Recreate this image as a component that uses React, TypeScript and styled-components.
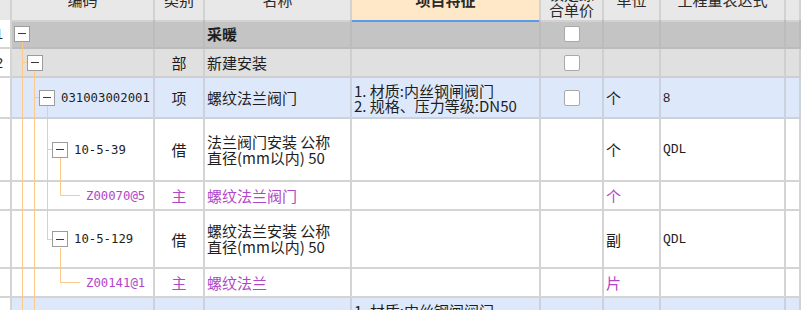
import React from 'react';
import styled, { createGlobalStyle } from 'styled-components';

const GlobalStyle = createGlobalStyle`
  html, body {
    margin: 0;
    padding: 0;
    background: #fff;
    overflow: hidden;
  }
  body {
    font-family: "Noto Sans CJK SC", "Liberation Sans", sans-serif;
    font-size: 15px;
    color: #1e1e1e;
  }
`;

const COLS = '12px 143px 50px 147px 189px 63px 57px 125px 1fr';

type Tone = 'section' | 'group' | 'item' | 'plain' | 'material';

const TONE_BG: Record<Tone, string> = {
  section: '#c4c4c4',
  group: '#e0e0e0',
  item: '#dde9fb',
  plain: '#ffffff',
  material: '#ffffff',
};

const TONE_LINE: Record<Tone, string> = {
  section: '#bcbcbc',
  group: '#cfcfcf',
  item: '#ccd2db',
  plain: '#d4d4d4',
  material: '#d4d4d4',
};

const GUIDE = '#fcc88c';
const LX = [10.5, 22.5, 35.5, 48.5];
const BOX_LEFT = [2, 15, 27, 40];
const LEAF_LEFT = 74;
const LEAF_STUB = 68;

interface TreeSpec {
  level: number;
  leaf?: boolean;
  full: number[];
  parent?: number;
  down?: boolean;
}

interface RowData {
  tone: Tone;
  h: number;
  num?: string;
  tree: TreeSpec;
  code?: string;
  kind?: string;
  name?: string[];
  bold?: boolean;
  feature?: string[];
  check?: boolean;
  unit?: string;
  qty?: string;
  qtyMono?: boolean;
}

const FEATURE = ['1. 材质:内丝钢闸阀门', '2. 规格、压力等级:DN50'];

const ROWS: RowData[] = [
  { tone: 'section', h: 29, num: '1', tree: { level: 0, full: [], down: true }, name: ['采暖'], bold: true, check: true },
  { tone: 'group', h: 29, num: '2', tree: { level: 1, full: [0], parent: 0, down: true }, kind: '部', name: ['新建安装'], check: true },
  {
    tone: 'item', h: 41, tree: { level: 2, full: [0, 1], parent: 1, down: true },
    code: '031003002001', kind: '项', name: ['螺纹法兰阀门'], feature: FEATURE, check: true, unit: '个', qty: '8',
  },
  {
    tone: 'plain', h: 63, tree: { level: 3, full: [0, 1, 2], parent: 2, down: true },
    code: '10-5-39', kind: '借', name: ['法兰阀门安装 公称', '直径(mm以内) 50'], unit: '个', qty: 'QDL', qtyMono: true,
  },
  {
    tone: 'material', h: 29, tree: { level: 4, leaf: true, full: [0, 1, 2], parent: 3 },
    code: 'Z00070@5', kind: '主', name: ['螺纹法兰阀门'], unit: '个',
  },
  {
    tone: 'plain', h: 58, tree: { level: 3, full: [0, 1], parent: 2, down: true },
    code: '10-5-129', kind: '借', name: ['螺纹法兰安装 公称', '直径(mm以内) 50'], unit: '副', qty: 'QDL', qtyMono: true,
  },
  {
    tone: 'material', h: 29, tree: { level: 4, leaf: true, full: [0, 1], parent: 3 },
    code: 'Z00141@1', kind: '主', name: ['螺纹法兰'], unit: '片',
  },
  { tone: 'item', h: 41, tree: { level: 2, full: [0, 1], parent: 1, down: true }, feature: FEATURE, check: true },
];

const Sheet = styled.div`
  width: 801px;
  height: 310px;
  overflow: hidden;
`;

const Scroller = styled.div`
  margin-top: -14px;
`;

const HeaderRow = styled.div`
  display: grid;
  grid-template-columns: ${COLS};
  height: 34px;
  background: #e8e8e8;
`;

const HeadCell = styled.div<{ $accent?: boolean; $tall?: boolean }>`
  box-sizing: border-box;
  display: flex;
  align-items: center;
  justify-content: center;
  text-align: center;
  padding-bottom: ${p => (p.$tall ? 2 : 6)}px;
  border-right: 2px solid #d2d2d2;
  border-bottom: 2px solid ${p => (p.$accent ? '#5a9be8' : '#d2d2d2')};
  background: ${p => (p.$accent ? '#ffe8c8' : '#e8e8e8')};
  font-weight: ${p => (p.$accent ? 700 : 400)};
  line-height: 16px;
  color: #2a2a2a;
  white-space: nowrap;
`;

const Row = styled.div<{ $tone: Tone; $h: number }>`
  display: grid;
  grid-template-columns: ${COLS};
  height: ${p => p.$h}px;
  background: ${p => TONE_BG[p.$tone]};
  color: ${p => (p.$tone === 'material' ? '#b246c8' : '#1e1e1e')};
`;

const Cell = styled.div<{ $tone: Tone; $center?: boolean; $pad?: number }>`
  box-sizing: border-box;
  position: relative;
  display: flex;
  align-items: center;
  justify-content: ${p => (p.$center ? 'center' : 'flex-start')};
  padding-left: ${p => (p.$center ? 0 : p.$pad ?? 2)}px;
  border-right: 2px solid ${p => TONE_LINE[p.$tone]};
  border-bottom: 2px solid ${p => TONE_LINE[p.$tone]};
  min-width: 0;
  white-space: nowrap;
`;

const NumCell = styled.div`
  box-sizing: border-box;
  display: flex;
  align-items: center;
  justify-content: flex-end;
  padding-right: 7px;
  overflow: hidden;
  background: #fff;
  border-right: 2px solid #d4d4d4;
  border-bottom: 2px solid #d4d4d4;
  font-family: "Liberation Sans", sans-serif;
  font-size: 14px;
  color: #222;
`;

const GuideLayer = styled.svg`
  position: absolute;
  left: 0;
  top: 0;
  overflow: visible;
  pointer-events: none;
  z-index: 1;
`;

const Toggle = styled.span`
  position: relative;
  z-index: 2;
  flex: none;
  box-sizing: border-box;
  width: 16px;
  height: 16px;
  border: 1px solid #9c9c9c;
  background: #fff;
  display: flex;
  align-items: center;
  justify-content: center;
  &::after {
    content: '';
    width: 8px;
    height: 1px;
    background: #3a3a3a;
  }
`;

const Code = styled.span<{ $gap: number }>`
  margin-left: ${p => p.$gap}px;
  font-family: "DejaVu Sans Mono", monospace;
  font-size: 12.3px;
`;

const Lines = styled.div<{ $lh: number; $bold?: boolean }>`
  line-height: ${p => p.$lh}px;
  font-weight: ${p => (p.$bold ? 700 : 400)};
`;

const Check = styled.span`
  box-sizing: border-box;
  width: 16px;
  height: 16px;
  border: 1px solid #a9a9a9;
  border-radius: 2px;
  background: #fff;
`;

const Qty = styled.span<{ $mono?: boolean }>`
  font-family: ${p => (p.$mono ? '"Liberation Mono", monospace' : '"Liberation Sans", sans-serif')};
  font-size: 13px;
`;

const Guides = ({ tree, h }: { tree: TreeSpec; h: number }) => {
  const mid = Math.floor((h - 2) / 2) + 0.5;
  const segs: [number, number, number, number][] = [];
  tree.full.forEach(l => segs.push([LX[l], 0, LX[l], h]));
  if (tree.parent !== undefined) {
    const px = LX[tree.parent];
    if (!tree.full.includes(tree.parent)) segs.push([px, 0, px, mid]);
    const end = tree.leaf ? LEAF_STUB : BOX_LEFT[tree.level];
    segs.push([px, mid, end, mid]);
  }
  if (tree.down) {
    const x = LX[tree.level];
    segs.push([x, mid + 8, x, h]);
  }
  return (
    <GuideLayer width={143} height={h}>
      {segs.map(([x1, y1, x2, y2], i) => (
        <line key={i} x1={x1} y1={y1} x2={x2} y2={y2} stroke={GUIDE} strokeWidth={1} shapeRendering="crispEdges" />
      ))}
    </GuideLayer>
  );
};

const CodeCell = ({ row }: { row: RowData }) => {
  const { tree } = row;
  const pad = tree.leaf ? LEAF_LEFT : BOX_LEFT[tree.level];
  return (
    <Cell $tone={row.tone} $pad={pad}>
      <Guides tree={tree} h={row.h} />
      {!tree.leaf && <Toggle />}
      {row.code && <Code $gap={tree.leaf ? 0 : 6}>{row.code}</Code>}
    </Cell>
  );
};

const BodyRow = ({ row }: { row: RowData }) => (
  <Row $tone={row.tone} $h={row.h}>
    <NumCell>{row.num}</NumCell>
    <CodeCell row={row} />
    <Cell $tone={row.tone} $center>{row.kind}</Cell>
    <Cell $tone={row.tone}>
      {row.name && (
        <Lines $lh={16} $bold={row.bold}>
          {row.name.map((l, i) => <div key={i}>{l}</div>)}
        </Lines>
      )}
    </Cell>
    <Cell $tone={row.tone}>
      {row.feature && (
        <Lines $lh={15}>
          {row.feature.map((l, i) => <div key={i}>{l}</div>)}
        </Lines>
      )}
    </Cell>
    <Cell $tone={row.tone} $center>{row.check && <Check />}</Cell>
    <Cell $tone={row.tone}>{row.unit}</Cell>
    <Cell $tone={row.tone}>{row.qty && <Qty $mono={row.qtyMono}>{row.qty}</Qty>}</Cell>
    <Cell $tone={row.tone} />
  </Row>
);

export default function App() {
  return (
    <>
      <GlobalStyle />
      <Sheet>
        <Scroller>
          <HeaderRow>
            <HeadCell />
            <HeadCell>编码</HeadCell>
            <HeadCell>类别</HeadCell>
            <HeadCell>名称</HeadCell>
            <HeadCell $accent>项目特征</HeadCell>
            <HeadCell $tall>
              锁定综<br />合单价
            </HeadCell>
            <HeadCell>单位</HeadCell>
            <HeadCell>工程量表达式</HeadCell>
            <HeadCell />
          </HeaderRow>
          {ROWS.map((row, i) => (
            <BodyRow key={i} row={row} />
          ))}
        </Scroller>
      </Sheet>
    </>
  );
}
